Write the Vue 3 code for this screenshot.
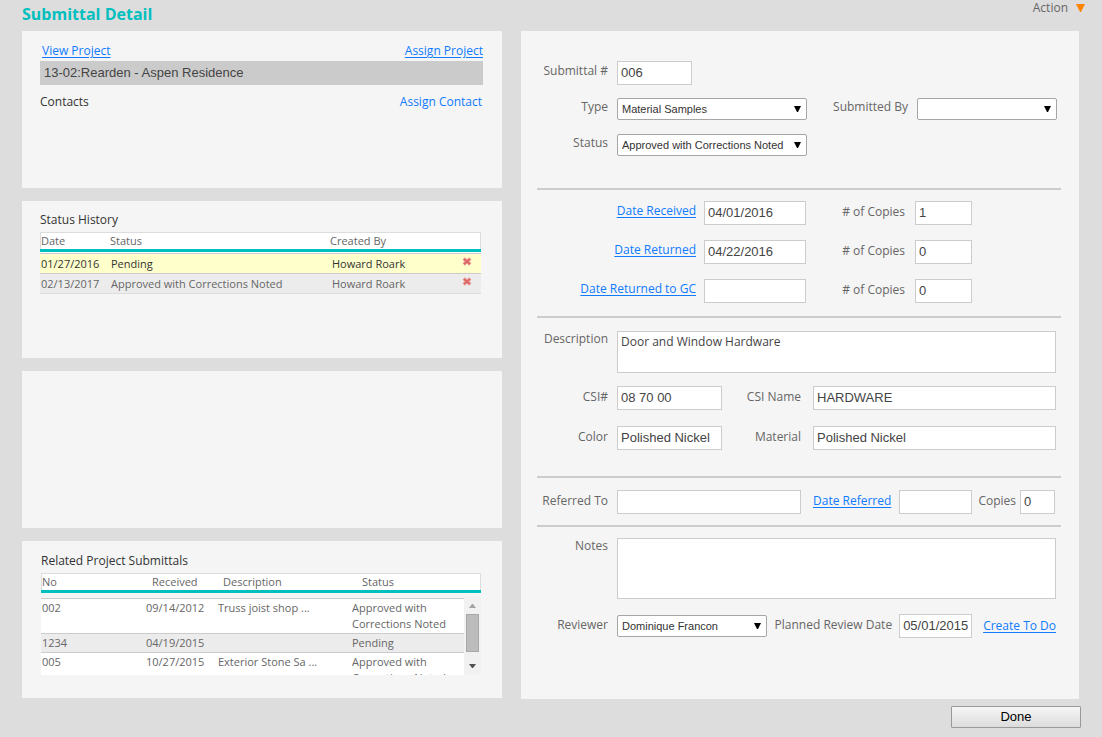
<script setup>
import { ref } from 'vue'

const history = ref([
  { date: '01/27/2016', status: 'Pending', by: 'Howard Roark', current: true },
  { date: '02/13/2017', status: 'Approved with Corrections Noted', by: 'Howard Roark', current: false }
])

const related = [
  { no: '002', received: '09/14/2012', description: 'Truss joist shop ...', status: 'Approved with Corrections Noted' },
  { no: '1234', received: '04/19/2015', description: '', status: 'Pending' },
  { no: '005', received: '10/27/2015', description: 'Exterior Stone Sa ...', status: 'Approved with Corrections Noted' }
]

const form = ref({
  number: '006',
  type: 'Material Samples',
  submittedBy: '',
  status: 'Approved with Corrections Noted',
  description: 'Door and Window Hardware',
  csi: '08 70 00',
  csiName: 'HARDWARE',
  color: 'Polished Nickel',
  material: 'Polished Nickel',
  referredTo: '',
  dateReferred: '',
  copies: '0',
  notes: '',
  reviewer: 'Dominique Francon',
  reviewDate: '05/01/2015'
})

const dates = ref([
  { id: 'received', label: 'Date Received', value: '04/01/2016', copies: '1' },
  { id: 'returned', label: 'Date Returned', value: '04/22/2016', copies: '0' },
  { id: 'returned-gc', label: 'Date Returned to GC', value: '', copies: '0' }
])
</script>

<template>
  <div class="page">
    <header class="top">
      <h1>Submittal Detail</h1>
      <button class="action" type="button">
        Action
        <svg width="9" height="8" viewBox="0 0 9 8" aria-hidden="true"><path d="M0 0H9L5 8H4Z" fill="#ff8400" /></svg>
      </button>
    </header>

    <main class="columns">
      <div class="left">
        <section class="panel project">
          <div class="link-row">
            <a href="#">View Project</a>
            <a href="#">Assign Project</a>
          </div>
          <div class="project-name">13-02:Rearden - Aspen Residence</div>
          <div class="contacts">
            <h2>Contacts</h2>
            <a class="plain" href="#">Assign Contact</a>
          </div>
        </section>

        <section class="panel history">
          <h2>Status History</h2>
          <table class="history-table">
            <colgroup><col class="c-date" /><col class="c-status" /><col class="c-by" /><col class="c-del" /></colgroup>
            <thead>
              <tr><th>Date</th><th>Status</th><th>Created By</th><th></th></tr>
            </thead>
            <tbody>
              <tr class="spacer"><td colspan="4"></td></tr>
              <tr v-for="row in history" :key="row.date" :class="{ current: row.current }">
                <td>{{ row.date }}</td>
                <td>{{ row.status }}</td>
                <td>{{ row.by }}</td>
                <td>
                  <button class="delete" type="button" aria-label="Delete status">
                    <svg width="10" height="9" viewBox="0 0 10 9"><path d="M1.7 1.5L8.3 7.5M8.3 1.5L1.7 7.5" stroke="#e9a09a" stroke-width="3.4" /><path d="M2 2L8 7M8 2L2 7" stroke="#df6866" stroke-width="1.8" /></svg>
                  </button>
                </td>
              </tr>
            </tbody>
          </table>
        </section>

        <section class="panel"></section>

        <section class="panel related">
          <h2>Related Project Submittals</h2>
          <table class="related-head">
            <colgroup><col class="h-no" /><col class="h-rec" /><col class="h-desc" /><col /></colgroup>
            <thead>
              <tr><th>No</th><th>Received</th><th>Description</th><th>Status</th></tr>
            </thead>
          </table>
          <div class="list">
            <div class="viewport">
              <table class="related-body">
                <colgroup><col class="b-no" /><col class="b-rec" /><col class="b-desc" /><col /></colgroup>
                <tbody>
                  <tr v-for="row in related" :key="row.no">
                    <td>{{ row.no }}</td>
                    <td>{{ row.received }}</td>
                    <td>{{ row.description }}</td>
                    <td>{{ row.status }}</td>
                  </tr>
                </tbody>
              </table>
            </div>
            <div class="scrollbar" aria-hidden="true">
              <svg width="7" height="4" viewBox="0 0 7 4"><path d="M0 4L3 0H4L7 4Z" fill="#a3a3a3" /></svg>
              <span class="thumb"></span>
              <svg class="down" width="7" height="4" viewBox="0 0 7 4"><path d="M0 0L3 4H4L7 0Z" fill="#505050" /></svg>
            </div>
          </div>
        </section>
      </div>

      <form class="panel detail" @submit.prevent>
        <div class="group general">
          <div class="row">
            <label for="number">Submittal #</label>
            <input id="number" v-model="form.number" class="w-num" type="text" />
          </div>
          <div class="row">
            <label for="type">Type</label>
            <span class="select w-type">
              <select id="type" v-model="form.type"><option>Material Samples</option></select>
              <svg width="7" height="7" viewBox="0 0 7 7"><path d="M0 0H7L4 6H3Z" /></svg>
            </span>
            <label class="push" for="submitted-by">Submitted By</label>
            <span class="select w-by">
              <select id="submitted-by" v-model="form.submittedBy"><option value=""></option></select>
              <svg width="7" height="7" viewBox="0 0 7 7"><path d="M0 0H7L4 6H3Z" /></svg>
            </span>
          </div>
          <div class="row">
            <label for="status">Status</label>
            <span class="select w-type">
              <select id="status" v-model="form.status"><option>Approved with Corrections Noted</option></select>
              <svg width="7" height="7" viewBox="0 0 7 7"><path d="M0 0H7L4 6H3Z" /></svg>
            </span>
          </div>
        </div>

        <div class="group dates">
          <div v-for="d in dates" :key="d.id" class="row">
            <a href="#">{{ d.label }}</a>
            <input v-model="d.value" class="w-date" type="text" :aria-label="d.label" />
            <label :for="'copies-' + d.id"># of Copies</label>
            <input :id="'copies-' + d.id" v-model="d.copies" class="w-copies" type="text" />
          </div>
        </div>

        <div class="group item">
          <div class="row top-label">
            <label for="description">Description</label>
            <textarea id="description" v-model="form.description"></textarea>
          </div>
          <div class="row">
            <label for="csi">CSI#</label>
            <input id="csi" v-model="form.csi" class="w-csi" type="text" />
            <label class="second" for="csi-name">CSI Name</label>
            <input id="csi-name" v-model="form.csiName" class="grow" type="text" />
          </div>
          <div class="row">
            <label for="color">Color</label>
            <input id="color" v-model="form.color" class="w-csi" type="text" />
            <label class="second" for="material">Material</label>
            <input id="material" v-model="form.material" class="grow" type="text" />
          </div>
        </div>

        <div class="group referral">
          <div class="row">
            <label for="referred-to">Referred To</label>
            <input id="referred-to" v-model="form.referredTo" class="grow" type="text" />
            <a class="ref-link" href="#">Date Referred</a>
            <input v-model="form.dateReferred" class="w-short" type="text" aria-label="Date Referred" />
            <label class="copies-label" for="copies">Copies</label>
            <input id="copies" v-model="form.copies" class="w-mini" type="text" />
          </div>
        </div>

        <div class="group review">
          <div class="row top-label">
            <label for="notes">Notes</label>
            <textarea id="notes" v-model="form.notes" class="tall"></textarea>
          </div>
          <div class="row">
            <label for="reviewer">Reviewer</label>
            <span class="select grow">
              <select id="reviewer" v-model="form.reviewer"><option>Dominique Francon</option></select>
              <svg width="7" height="7" viewBox="0 0 7 7"><path d="M0 0H7L4 6H3Z" /></svg>
            </span>
            <label class="planned" for="review-date">Planned Review Date</label>
            <input id="review-date" v-model="form.reviewDate" class="w-short" type="text" />
            <a class="todo" href="#">Create To Do</a>
          </div>
        </div>
      </form>
    </main>

    <footer class="bottom">
      <button class="done" type="button">Done</button>
    </footer>
  </div>
</template>

<style>
body {
  background: #ddd;
}
</style>

<style scoped>
.page {
  font-family: "Trebuchet MS", "Open Sans", sans-serif;
  font-size: 12px;
  line-height: 16px;
  color: #666;
}
.page * {
  box-sizing: border-box;
}
.top {
  display: flex;
  justify-content: space-between;
  align-items: flex-start;
  height: 31px;
  padding: 0 17px 0 22px;
}
h1 {
  margin: 0;
  padding-top: 4px;
  font-size: 16px;
  line-height: 20px;
  color: #00bfbf;
}
h2 {
  margin: 0;
  font-size: 12px;
  line-height: 16px;
  font-weight: 400;
  color: #333;
}
button {
  font: inherit;
  color: inherit;
}
.action {
  display: flex;
  align-items: center;
  gap: 8px;
  padding: 0;
  border: 0;
  background: none;
}
.columns {
  display: grid;
  grid-template-columns: 480fr 558fr;
  gap: 19px;
  align-items: start;
  padding: 0 23px 0 22px;
}
.left {
  display: grid;
  gap: 13px;
}
.panel {
  min-width: 0;
  min-height: 157px;
  background: #f5f5f5;
}
a {
  color: #0f7bff;
  white-space: nowrap;
  text-underline-offset: 2px;
}
.plain {
  text-decoration: none;
}
.project {
  padding: 12px 19px 0 18px;
}
.link-row {
  display: flex;
  justify-content: space-between;
  padding-left: 2px;
}
.project-name {
  margin-top: 2px;
  padding: 0 4px;
  background: #cbcbcb;
  color: #444;
  font: 13px/24px "Liberation Sans", Arial, sans-serif;
}
.contacts {
  display: flex;
  justify-content: space-between;
  margin-top: 9px;
  padding-right: 1px;
}
table {
  width: 100%;
  table-layout: fixed;
  border-collapse: separate;
  border-spacing: 0;
  font-size: 11px;
  line-height: 16px;
}
th, td {
  padding: 0;
  text-align: left;
  font-weight: 400;
  vertical-align: top;
}
th {
  height: 20px;
  border-top: 1px solid #ddd;
  border-bottom: 3px solid #00bfbf;
  background: #fff;
  white-space: nowrap;
}
th:first-child {
  box-shadow: inset 1px 0 #ddd;
  padding-left: 1px;
}
th:last-child {
  box-shadow: inset -1px 0 #ddd;
}
.history {
  padding: 11px 21px 0 18px;
}
.history-table {
  margin-top: 4px;
}
.c-date { width: 70px; }
.c-by { width: 131px; }
.c-del { width: 20px; }
.history-table td {
  height: 20px;
  padding: 2px 0 1px 1px;
  border-top: 1px solid #ccc;
  background: #ececec;
}
.history-table tr:last-child td {
  height: 21px;
  border-bottom: 1px solid #ddd;
}
.history-table td:nth-child(3) {
  padding-left: 2px;
}
.history-table .current td {
  background: #ffc;
  color: #333;
}
.history-table .spacer td {
  height: 1px;
  padding: 0;
  border: 0;
  background: #fff;
}
.delete {
  display: block;
  margin-top: 1px;
  padding: 0;
  border: 0;
  background: none;
  line-height: 0;
}
.related {
  padding: 12px 21px 0 19px;
}
.related-head {
  margin-top: 4px;
}
.h-no { width: 111px; }
.h-rec { width: 71px; }
.h-desc { width: 139px; }
.list {
  display: flex;
  height: 78px;
  margin-top: 4px;
}
.viewport {
  flex: 1;
  min-width: 0;
  overflow-y: auto;
  scrollbar-width: none;
  padding-top: 1px;
}
.b-no { width: 104px; }
.b-rec { width: 72px; }
.b-desc { width: 134px; }
.related-body td {
  padding: 1px;
  border-top: 1px solid #ccc;
  background: #fff;
}
.related-body tr:nth-child(even) td {
  background: #ececec;
}
.scrollbar {
  display: flex;
  flex-direction: column;
  align-items: center;
  width: 17px;
  padding: 7px 0;
  background: #f1f1f1;
}
.thumb {
  width: 13px;
  height: 38px;
  margin-top: 6px;
  border: 1px solid #a8a8a8;
  background: #bcbcbc;
}
.down {
  margin-top: auto;
}
.detail {
  padding: 0 18px 61px 16px;
}
.group {
  display: grid;
  padding-right: 5px;
}
.group + .group {
  border-top: 2px solid #ccc;
}
.general { padding: 30px 4px 32px 0; gap: 13px; }
.general .row:last-child { margin-top: 1px; }
.dates { padding-top: 11px; padding-bottom: 13px; gap: 15px; }
.item { padding-top: 13px; padding-bottom: 26px; gap: 13px; }
.item .row:last-child { margin-top: 3px; }
.referral { padding: 12px 6px 11px 0; }
.review { padding-top: 11px; gap: 15px; }
.row {
  display: flex;
  align-items: center;
  min-width: 0;
}
.row label {
  flex: none;
  padding-bottom: 2px;
  text-align: right;
  white-space: nowrap;
}
.general .row label {
  padding-bottom: 4px;
}
.row > label:first-child {
  width: 71px;
  margin-right: 9px;
}
.row label.push {
  margin-left: auto;
  margin-right: 9px;
}
.dates a {
  width: 159px;
  margin-right: 8px;
  padding-bottom: 4px;
  text-align: right;
}
.dates label {
  width: 99px;
  margin-right: 10px;
}
.row .second {
  width: 79px;
  margin-right: 12px;
}
.ref-link {
  width: 78px;
  margin: 0 8px 0 12px;
  padding-bottom: 2px;
}
.copies-label {
  width: 39px;
  margin: 0 4px 0 5px;
}
.planned {
  margin: 0 7px 0 8px;
}
.todo {
  margin-left: 11px;
}
.top-label {
  align-items: flex-start;
}
input, textarea, select {
  min-width: 0;
  margin: 0;
  border: 1px solid #ccc;
  border-radius: 0;
  background: #fff;
  color: #444;
  font: 13px/20px "Liberation Sans", Arial, sans-serif;
}
input {
  flex: none;
  height: 24px;
  padding: 0 3px 2px;
}
textarea {
  flex: 1;
  display: block;
  height: 42px;
  padding: 0 3px;
  resize: none;
  font-family: "Trebuchet MS", "Open Sans", sans-serif;
  font-size: 12px;
}
.tall {
  height: 61px;
}
.select {
  position: relative;
  flex: none;
  height: 22px;
}
.select svg {
  position: absolute;
  right: 6px;
  top: 8px;
  pointer-events: none;
}
select {
  display: block;
  appearance: none;
  width: 100%;
  height: 22px;
  padding: 0 4px;
  border-color: #a6a6a6;
  border-radius: 2px;
  font-size: 11px;
  color: #333;
}
.row .grow { flex: 1; }
.w-num { width: 75px; }
.w-type { width: 190px; }
.w-by { width: 140px; }
.w-date { width: 102px; }
.w-copies { width: 57px; }
.w-csi { width: 105px; }
.w-short { width: 73px; }
.w-mini { width: 35px; }
.bottom {
  display: flex;
  justify-content: flex-end;
  padding: 7px 21px 8px;
}
.done {
  width: 130px;
  height: 22px;
  padding: 0;
  border: 1px solid #999;
  border-radius: 1px;
  background: linear-gradient(#f6f6f6, #dcdcdc);
  color: #000;
  font: 13px/18px "Liberation Sans", Arial, sans-serif;
}
</style>
